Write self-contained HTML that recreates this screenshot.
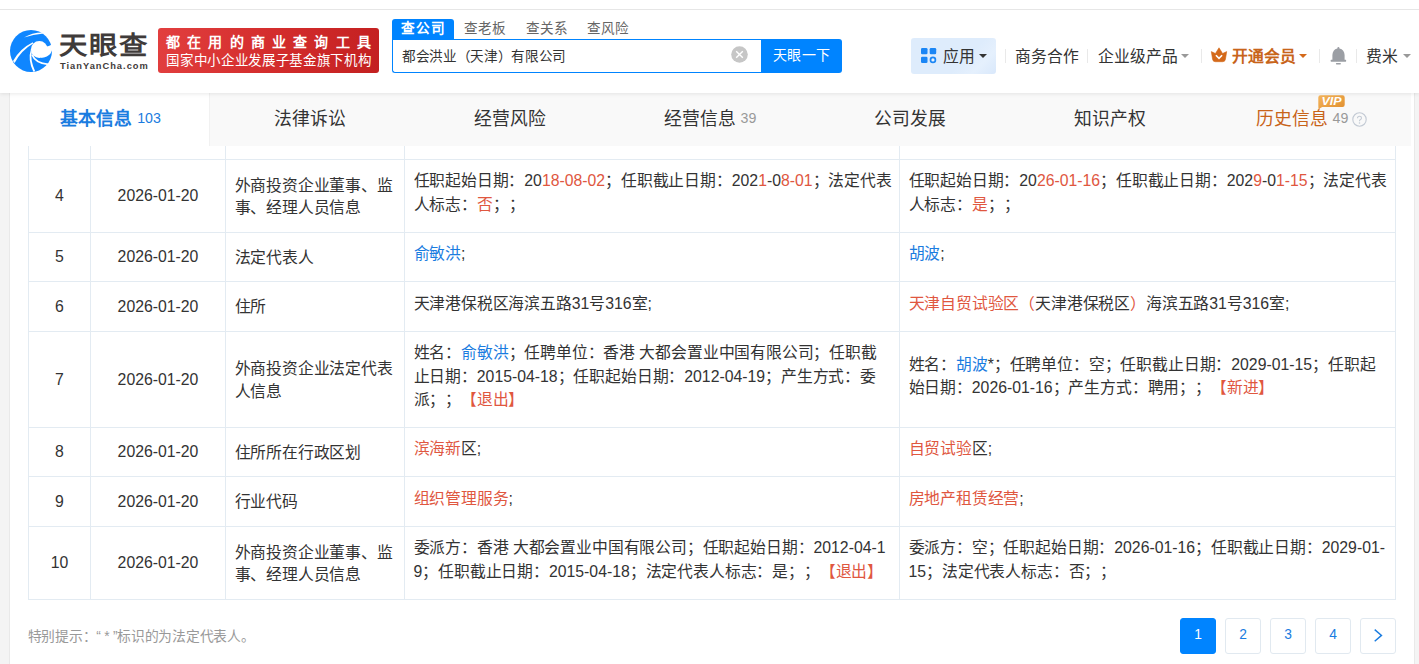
<!DOCTYPE html>
<html lang="zh-CN">
<head>
<meta charset="utf-8">
<title>天眼查</title>
<style>
*{box-sizing:border-box;margin:0;padding:0}
html,body{width:1419px;height:664px;overflow:hidden;background:#f4f4f4;font-family:"Liberation Sans",sans-serif;color:#333;text-spacing-trim:space-all}
body{position:relative}
.abs{position:absolute}
#hdr{position:absolute;left:0;top:0;width:1419px;height:93px;background:#fff;box-shadow:0 1px 4px rgba(0,0,0,.09);z-index:5}
#topline{position:absolute;left:0;top:9px;width:1419px;height:1px;background:#e6e6e6}
#main{position:absolute;left:10px;top:93px;width:1404px;height:571px;background:#fff;box-shadow:-1px 0 0 #e9e9e9,1px 0 0 #e9e9e9}
#tabs{position:absolute;left:0;top:0;width:1401px;height:53px;background:#f9f9f9}
.tab{position:absolute;top:0;height:53px;width:200px;text-align:center;font-size:17.8px;line-height:53px;color:#333;white-space:nowrap}
.tab.on{background:#fff;color:#1a7ce0;font-weight:bold;width:200px;border-right:1px solid #f1f1f1;padding-left:2px}
.tab small{font-size:14.2px;font-weight:normal;margin-left:5px;position:relative;top:-2.2px}

#tbl{position:absolute;left:18px;top:53px;width:1368px;height:454px}
.vl{position:absolute;top:0;width:1px;height:454px;background:#e3ebf2}
.hl{position:absolute;left:0;height:1px;width:1368px;background:#e3ebf2}
.row{position:absolute;left:0;width:1368px;font-size:15.8px;color:#333}
.row>div{position:absolute;top:1px;bottom:0;display:flex;align-items:center;white-space:nowrap}
.c1{left:1px;width:61px;justify-content:center}
.c2{left:63px;width:134px;justify-content:center}
.c3{left:198px;width:178px;padding-left:8.5px;padding-top:2.4px;line-height:22.5px;letter-spacing:-.17px}
.c4{left:377px;width:494px;padding-left:8.5px;line-height:23.6px;padding-bottom:6.2px;letter-spacing:-.17px}
.c5{left:872px;width:495px;padding-left:8.5px;line-height:23.6px;padding-bottom:6.2px;letter-spacing:-.17px}
.row i{font-style:normal;letter-spacing:0}
.r{color:#e0573f}
.b{color:#1a7ce0}

#note{position:absolute;left:17.5px;top:533.7px;font-size:13.8px;line-height:20px;color:#999;white-space:nowrap;letter-spacing:-.25px}
.pg{position:absolute;top:525px;width:36px;height:36px;border:1px solid #e1e9f0;border-radius:3px;text-align:center;line-height:31px;font-size:13.8px;color:#1a7ce0;background:#fff}
.pg.on{background:#0084ff;border-color:#0084ff;color:#fff}

#logo{position:absolute;left:5px;top:25px;width:52px;height:52px}
#lt1{position:absolute;left:59px;top:29px;font-size:25.5px;line-height:32px;font-weight:bold;color:#3f3b3a;letter-spacing:1.2px;white-space:nowrap;transform:scaleX(1.11);transform-origin:0 0}
#lt2{position:absolute;left:60px;top:60px;font-size:9.3px;line-height:12px;font-weight:bold;color:#3f3b3a;letter-spacing:1.0px;white-space:nowrap}
#ban{position:absolute;left:158px;top:28px;width:221px;height:45px;border-radius:3px;background:linear-gradient(100deg,#e23f3f 0%,#d42d2d 50%,#c32020 100%);color:#fff;white-space:nowrap}
#ban div{position:absolute;left:0;width:221px;text-align:center}
#b1{top:4px;font-size:14px;line-height:20px;font-weight:bold;letter-spacing:7.2px;text-indent:7.2px}
#b2{top:22.5px;font-size:13.5px;line-height:20px;letter-spacing:.65px;text-indent:.65px;font-weight:500}

.stab{position:absolute;top:19px;height:20px;width:61.5px;text-align:center;font-size:13.6px;line-height:20px;padding-left:2px;color:#666;white-space:nowrap}
.stab.on{background:#0084ff;color:#fff;border-radius:3px 3px 0 0;font-weight:bold;letter-spacing:.8px;padding-left:1px}
#sbox{position:absolute;left:392px;top:39px;width:370px;height:34px;border:1px solid #0084ff;border-right:0;border-radius:0 0 0 3px;background:#fff;font-size:13.6px;line-height:34px;padding-left:9px;white-space:nowrap;color:#333;letter-spacing:-.35px}
#sbtn{position:absolute;left:761px;top:39px;width:81px;height:34px;background:#0084ff;border-radius:0 3px 3px 0;color:#fff;font-size:14px;line-height:33px;text-align:center;white-space:nowrap;font-weight:500;letter-spacing:.5px;text-indent:.5px}
#sclr{position:absolute;left:731px;top:46px;width:17px;height:17px}
#app{position:absolute;left:911px;top:38px;width:85px;height:36px;background:linear-gradient(135deg,#deecfc 0%,#deecfc 62%,#e5f0fd 80%,#d9e8fb 100%);border-radius:3px}
.nav{position:absolute;top:45px;font-size:15.8px;line-height:24px;white-space:nowrap;color:#333}
.sep{position:absolute;top:49px;width:1px;height:14px;background:#e9e9e9}
.car{position:absolute;top:53.5px;width:0;height:0;border-left:4px solid transparent;border-right:4px solid transparent;border-top:4px solid #999}
</style>
</head>
<body>
<div id="hdr">
<div id="topline"></div>
<svg id="logo" viewBox="0 0 52 52">
<circle cx="26" cy="26" r="21" fill="#0f86ff"/>
<circle cx="34.3" cy="24.5" r="8.4" fill="#fff"/>
<path d="M43.8 20.9 L49 18.5 L49 25 L47.1 25.1 Q45.9 29.8 41.8 31.5 Q39 32.7 36 32.8 L39.5 22 Z" fill="#fff"/>
<path d="M19 12.6 Q27 7.2 38.4 7.4 L38.6 8.4 Q28 9.4 19 12.6 Z" fill="#fff"/>
<path d="M8 36 Q15 23.6 27.8 17.3 L28.2 18.6 Q16.6 25.2 9.6 37.9 Z" fill="#fff"/>
<path d="M26 24 Q22.4 35 28.4 46.8 L30.2 46.2 Q25 35 26.8 27 Z" fill="#fff"/>
<path d="M27 29.6 Q30.4 38.2 43.4 39.4" fill="none" stroke="#fff" stroke-width="1.6"/>
</svg>
<div id="lt1">天眼查</div>
<div id="lt2">TianYanCha.com</div>
<div id="ban"><div id="b1">都在用的商业查询工具</div><div id="b2">国家中小企业发展子基金旗下机构</div></div>
<div class="stab on" style="left:392px">查公司</div>
<div class="stab" style="left:453.5px">查老板</div>
<div class="stab" style="left:515px">查关系</div>
<div class="stab" style="left:576.5px">查风险</div>
<div id="sbox">都会洪业（天津）有限公司</div>
<svg id="sclr" viewBox="0 0 17 17"><circle cx="8.5" cy="8.5" r="8.3" fill="#c6c6c6"/><path d="M5.2 5.2 L11.8 11.8 M11.8 5.2 L5.2 11.8" stroke="#fff" stroke-width="1.4" fill="none"/></svg>
<div id="sbtn">天眼一下</div>
<div id="app"></div>
<svg class="abs" style="left:921.3px;top:48.2px" width="16" height="16" viewBox="0 0 16 16"><rect x="0" y="0" width="6.5" height="6.3" rx="1.3" fill="#1b86f5"/><rect x="8.7" y="0" width="6.5" height="6.3" rx="1.3" fill="#1b86f5"/><rect x="0" y="8.7" width="6.5" height="6.3" rx="1.3" fill="#1b86f5"/><circle cx="11.95" cy="11.9" r="2.45" fill="#e8f3ff" stroke="#1b86f5" stroke-width="1.7"/></svg>
<div class="nav" style="left:942.5px">应用</div>
<div class="car" style="left:979px;border-top-color:#333"></div>
<div class="sep" style="left:1005px"></div>
<div class="nav" style="left:1015px">商务合作</div>
<div class="sep" style="left:1087px"></div>
<div class="nav" style="left:1098px">企业级产品</div>
<div class="car" style="left:1181px"></div>
<div class="sep" style="left:1201px"></div>
<svg class="abs" style="left:1210px;top:46px" width="18" height="18" viewBox="0 0 18 18"><path d="M1.3 5.6 L5.4 7.5 L9 1.8 L12.6 7.5 L16.7 5.6 L15.4 13.4 Q15 15.7 12.6 15.7 L5.4 15.7 Q3 15.7 2.6 13.4 Z" fill="#d4691a" stroke="#d4691a" stroke-width=".6" stroke-linejoin="round"/><path d="M5.9 9.2 L9 12.4 L12.1 9.2" fill="none" stroke="#fff" stroke-width="1.6"/></svg>
<div class="nav" style="left:1231.8px;color:#c8641a;font-weight:bold">开通会员</div>
<div class="car" style="left:1299px;border-top-color:#d4691a"></div>
<div class="sep" style="left:1319px"></div>
<svg class="abs" style="left:1329px;top:46px" width="19" height="20" viewBox="0 0 19 20"><path d="M9.4 1 Q10.4 1 10.5 2.4 Q15.4 3.6 15.6 9 L15.6 13.7 L16.6 13.7 Q17.2 13.7 17.2 14.7 Q17.2 15.7 16.6 15.7 L2.2 15.7 Q1.6 15.7 1.6 14.7 Q1.6 13.7 2.2 13.7 L3.4 13.7 L3.4 9 Q3.6 3.6 8.3 2.4 Q8.4 1 9.4 1 Z" fill="#9b9ea4"/><rect x="6.9" y="17" width="5" height="1.5" rx=".7" fill="#9b9ea4"/></svg>
<div class="sep" style="left:1356px"></div>
<div class="nav" style="left:1366px">费米</div>
<div class="car" style="left:1403px"></div>
</div>
<div id="main">
<div id="tabs">
<div class="tab on" style="left:0">基本信息<small>103</small></div>
<div class="tab" style="left:200px">法律诉讼</div>
<div class="tab" style="left:400px">经营风险</div>
<div class="tab" style="left:600px">经营信息<small style="color:#999">39</small></div>
<div class="tab" style="left:800px">公司发展</div>
<div class="tab" style="left:1000px">知识产权</div>
<div class="tab" style="left:1200px;color:#c8641a;padding-left:3px">历史信息<small style="color:#999">49</small><svg width="15" height="15" viewBox="0 0 15 15" style="display:inline-block;vertical-align:-2px;margin-left:4px"><circle cx="7.5" cy="7.5" r="6.7" fill="none" stroke="#c3cad4" stroke-width="1.1"/><path d="M5.5 6.2 Q5.5 4.2 7.5 4.2 Q9.5 4.2 9.5 6 Q9.5 7.2 8.2 7.8 Q7.5 8.2 7.5 9.2" fill="none" stroke="#c3cad4" stroke-width="1.1"/><circle cx="7.5" cy="10.9" r=".75" fill="#c3cad4"/></svg></div>
<svg class="abs" style="left:1308px;top:2px" width="28" height="16" viewBox="0 0 28 16"><defs><linearGradient id="vg" x1="0" y1="0" x2="1" y2="1"><stop offset="0" stop-color="#f4b55c"/><stop offset="1" stop-color="#e08d2c"/></linearGradient></defs><path d="M2.5 0.3 L24.5 0.3 Q26.7 0.3 26.7 2.5 L26.7 9.8 Q26.7 12 24.5 12 L4.2 12 Q1.8 13 0.6 15.2 Q0.3 12 0.3 9 L0.3 2.5 Q0.3 0.3 2.5 0.3 Z" fill="url(#vg)"/><text x="13.6" y="9.9" font-family="Liberation Sans, sans-serif" font-size="10" font-weight="bold" font-style="italic" fill="#fff" text-anchor="middle" textLength="20" lengthAdjust="spacingAndGlyphs">VIP</text></svg>
</div>
<div id="tbl">
<div class="vl" style="left:0px"></div><div class="vl" style="left:62px"></div><div class="vl" style="left:197px"></div><div class="vl" style="left:376px"></div><div class="vl" style="left:871px"></div><div class="vl" style="left:1367px"></div>
<div class="hl" style="top:13px"></div><div class="hl" style="top:86px"></div><div class="hl" style="top:135px"></div><div class="hl" style="top:185px"></div><div class="hl" style="top:281px"></div><div class="hl" style="top:330px"></div><div class="hl" style="top:380px"></div><div class="hl" style="top:453px"></div>
<div class="row" style="top:13px;height:73px"><div class="c1">4</div><div class="c2">2026-01-20</div><div class="c3"><p>外商投资企业董事、监<br>事、经理人员信息</p></div><div class="c4"><p>任职起始日期：<i>20</i><span class="r"><i>18-08-02</i></span>；任职截止日期：<i>202</i><span class="r"><i>1</i></span><i>-0</i><span class="r"><i>8-01</i></span>；法定代表<br>人标志：<span class="r">否</span>；；</p></div><div class="c5"><p>任职起始日期：<i>20</i><span class="r"><i>26-01-16</i></span>；任职截止日期：<i>202</i><span class="r"><i>9</i></span><i>-0</i><span class="r"><i>1-15</i></span>；法定代表<br>人标志：<span class="r">是</span>；；</p></div></div>
<div class="row" style="top:86px;height:49px"><div class="c1">5</div><div class="c2">2026-01-20</div><div class="c3"><p>法定代表人</p></div><div class="c4"><p><span class="b">俞敏洪</span><i>;</i></p></div><div class="c5"><p><span class="b">胡波</span><i>;</i></p></div></div>
<div class="row" style="top:135px;height:50px"><div class="c1">6</div><div class="c2">2026-01-20</div><div class="c3"><p>住所</p></div><div class="c4"><p>天津港保税区海滨五路<i>31</i>号<i>316</i>室<i>;</i></p></div><div class="c5"><p><span class="r">天津自贸试验区（</span>天津港保税区<span class="r">）</span>海滨五路<i>31</i>号<i>316</i>室<i>;</i></p></div></div>
<div class="row" style="top:185px;height:96px"><div class="c1">7</div><div class="c2">2026-01-20</div><div class="c3"><p>外商投资企业法定代表<br>人信息</p></div><div class="c4"><p>姓名：<span class="b">俞敏洪</span>；任聘单位：香港 大都会置业中国有限公司；任职截<br>止日期：<i>2015-04-18</i>；任职起始日期：<i>2012-04-19</i>；产生方式：委<br>派；；<span class="r">【退出】</span></p></div><div class="c5"><p>姓名：<span class="b">胡波</span><i>*</i>；任聘单位：空；任职截止日期：<i>2029-01-15</i>；任职起<br>始日期：<i>2026-01-16</i>；产生方式：聘用；；<span class="r">【新进】</span></p></div></div>
<div class="row" style="top:281px;height:49px"><div class="c1">8</div><div class="c2">2026-01-20</div><div class="c3"><p>住所所在行政区划</p></div><div class="c4"><p><span class="r">滨海新</span>区<i>;</i></p></div><div class="c5"><p><span class="r">自贸试验</span>区<i>;</i></p></div></div>
<div class="row" style="top:330px;height:50px"><div class="c1">9</div><div class="c2">2026-01-20</div><div class="c3"><p>行业代码</p></div><div class="c4"><p><span class="r">组织管理服务</span><i>;</i></p></div><div class="c5"><p><span class="r">房地产租赁经营</span><i>;</i></p></div></div>
<div class="row" style="top:380px;height:73px"><div class="c1">10</div><div class="c2">2026-01-20</div><div class="c3"><p>外商投资企业董事、监<br>事、经理人员信息</p></div><div class="c4"><p>委派方：香港 大都会置业中国有限公司；任职起始日期：<i>2012-04-1</i><br><i>9</i>；任职截止日期：<i>2015-04-18</i>；法定代表人标志：是；；<span class="r">【退出】</span></p></div><div class="c5"><p>委派方：空；任职起始日期：<i>2026-01-16</i>；任职截止日期：<i>2029-01-</i><br><i>15</i>；法定代表人标志：否；；</p></div></div>
</div>
<div id="note">特别提示：“ * ”标识的为法定代表人。</div>
<div class="pg on" style="left:1170px">1</div>
<div class="pg" style="left:1215px">2</div>
<div class="pg" style="left:1260px">3</div>
<div class="pg" style="left:1305px">4</div>
<div class="pg" style="left:1350px"><svg width="34" height="34" viewBox="0 0 34 34" style="display:block"><path d="M13.7 10.6 L20.5 16.4 L13.7 22.2" fill="none" stroke="#1a7ce0" stroke-width="1.4"/></svg></div>
</div>
</body>
</html>
